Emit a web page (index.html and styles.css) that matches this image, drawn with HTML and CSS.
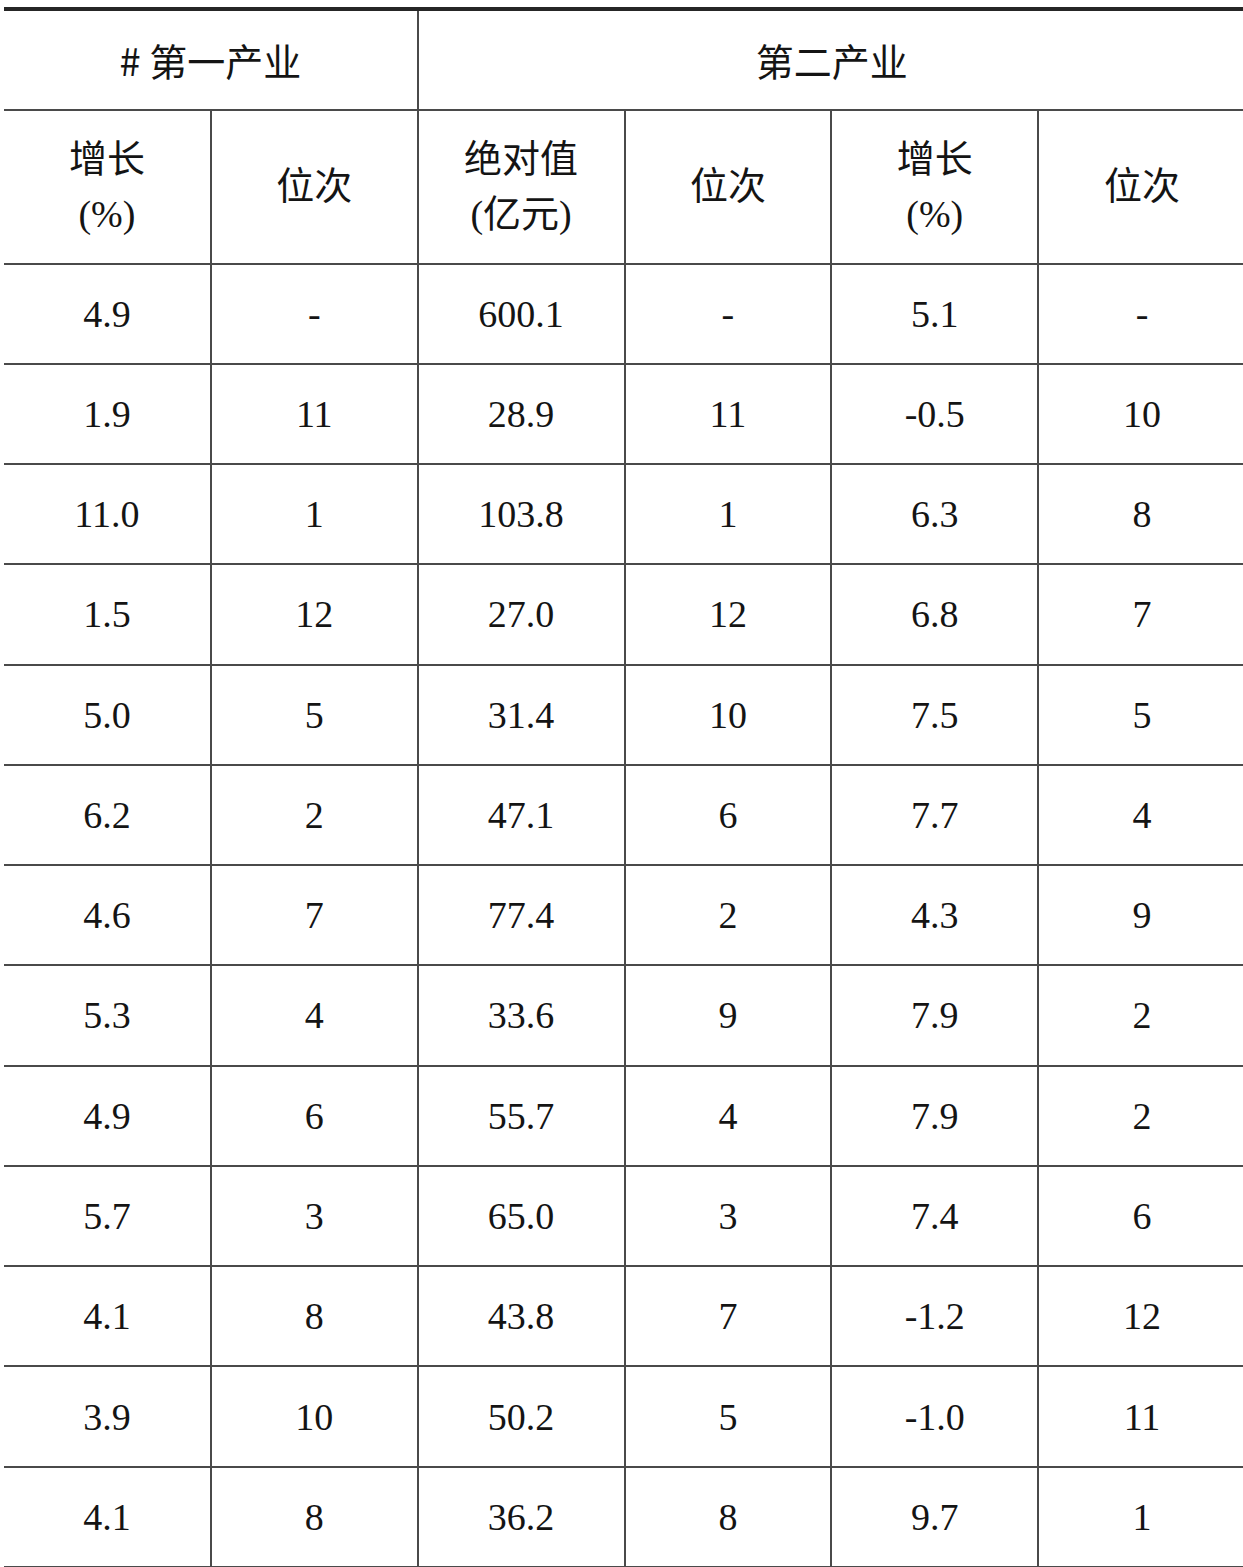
FILE: index.html
```html
<!DOCTYPE html>
<html lang="zh-CN">
<head>
<meta charset="utf-8">
<link rel="stylesheet" href="styles.css">
</head>
<body>
<table class="stats">
  <colgroup>
    <col class="c"><col class="c"><col class="c"><col class="c"><col class="c"><col class="c">
  </colgroup>
  <thead>
    <tr class="h1">
      <th colspan="2"># 第一产业</th>
      <th colspan="4">第二产业</th>
    </tr>
    <tr class="h2">
      <th>增长<br>(%)</th>
      <th>位次</th>
      <th>绝对值<br>(亿元)</th>
      <th>位次</th>
      <th>增长<br>(%)</th>
      <th>位次</th>
    </tr>
  </thead>
  <tbody>
    <tr><td>4.9</td><td>-</td><td>600.1</td><td>-</td><td>5.1</td><td>-</td></tr>
    <tr><td>1.9</td><td>11</td><td>28.9</td><td>11</td><td>-0.5</td><td>10</td></tr>
    <tr><td>11.0</td><td>1</td><td>103.8</td><td>1</td><td>6.3</td><td>8</td></tr>
    <tr><td>1.5</td><td>12</td><td>27.0</td><td>12</td><td>6.8</td><td>7</td></tr>
    <tr><td>5.0</td><td>5</td><td>31.4</td><td>10</td><td>7.5</td><td>5</td></tr>
    <tr><td>6.2</td><td>2</td><td>47.1</td><td>6</td><td>7.7</td><td>4</td></tr>
    <tr><td>4.6</td><td>7</td><td>77.4</td><td>2</td><td>4.3</td><td>9</td></tr>
    <tr><td>5.3</td><td>4</td><td>33.6</td><td>9</td><td>7.9</td><td>2</td></tr>
    <tr><td>4.9</td><td>6</td><td>55.7</td><td>4</td><td>7.9</td><td>2</td></tr>
    <tr><td>5.7</td><td>3</td><td>65.0</td><td>3</td><td>7.4</td><td>6</td></tr>
    <tr><td>4.1</td><td>8</td><td>43.8</td><td>7</td><td>-1.2</td><td>12</td></tr>
    <tr><td>3.9</td><td>10</td><td>50.2</td><td>5</td><td>-1.0</td><td>11</td></tr>
    <tr><td>4.1</td><td>8</td><td>36.2</td><td>8</td><td>9.7</td><td>1</td></tr>
  </tbody>
</table>
</body>
</html>
```
FILE: styles.css
```css
html, body {
  margin: 0;
  padding: 0;
  background: #fff;
}
body {
  overflow: hidden;
}
.stats {
  margin: 7px 0 0 4px;
  width: 1241px;
  table-layout: fixed;
  border-collapse: collapse;
  border-top: 4px solid #262626;
  font-family: "Liberation Serif", "Noto Sans CJK SC", serif;
  font-size: 38px;
  color: #141414;
}
.stats col.c {
  width: 206.83px;
}
.stats th,
.stats td {
  border: 2px solid #4a4a4a;
  padding: 0;
  text-align: center;
  vertical-align: middle;
  font-weight: normal;
}
.stats tr > :first-child {
  border-left: none;
}
.stats tr > :last-child {
  border-right: none;
}
.stats thead tr:first-child th {
  border-top: none;
}
.stats .h1 th {
  height: 97.5px;
  font-family: "Noto Sans CJK SC", serif;
}
.stats .h2 th {
  height: 152px;
  line-height: 55px;
  font-family: "Liberation Serif", "Noto Sans CJK SC", serif;
}
.stats tbody td {
  height: 98.27px;
  line-height: 1;
}
```
